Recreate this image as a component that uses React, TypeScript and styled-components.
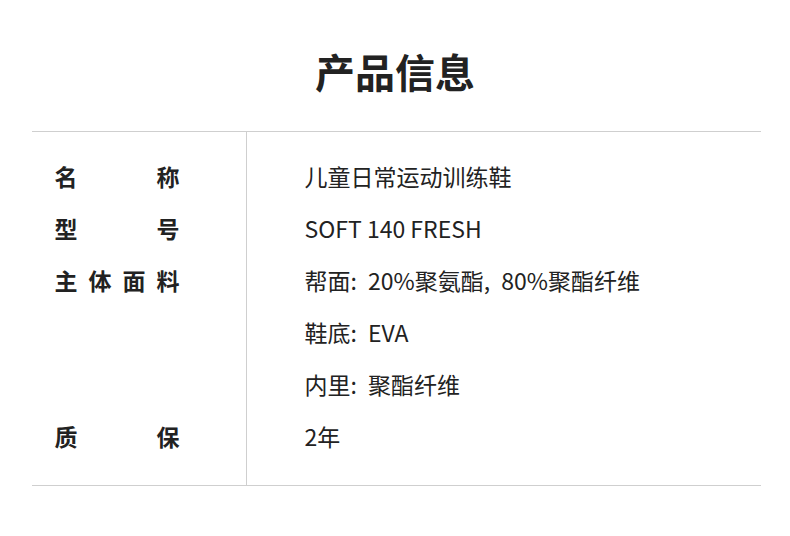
import React from 'react'
import styled, { createGlobalStyle } from 'styled-components'

const GlobalStyle = createGlobalStyle`
  html, body {
    margin: 0;
    padding: 0;
    background: #fff;
  }
  body {
    font-family: "Noto Sans CJK SC", "Noto Sans", sans-serif;
    color: #222;
  }
`

interface Spec {
  label: string
  values: string[]
}

const specs: Spec[] = [
  { label: '名称', values: ['儿童日常运动训练鞋'] },
  { label: '型号', values: ['SOFT 140 FRESH'] },
  { label: '主体面料', values: ['帮面: 20%聚氨酯, 80%聚酯纤维', '鞋底: EVA', '内里: 聚酯纤维'] },
  { label: '质保', values: ['2年'] },
]

// punctuation in the source sits a little looser than a plain space
const renderValue = (value: string) =>
  value.split(/([:,] )/).map((part, i) =>
    /^[:,] $/.test(part) ? <StyledSep key={i}>{part}</StyledSep> : <React.Fragment key={i}>{part}</React.Fragment>
  )

const App: React.FC = () => {
  return (
    <StyledPage>
      <GlobalStyle />
      <StyledTitle>产品信息</StyledTitle>
      <StyledTable>
        <StyledLabelColumn>
          {specs.map((spec) =>
            spec.values.map((_, i) => (
              <StyledRow key={`${spec.label}-${i}`}>
                {i === 0 && <StyledLabel>{spec.label}</StyledLabel>}
              </StyledRow>
            ))
          )}
        </StyledLabelColumn>
        <StyledValueColumn>
          {specs.map((spec) =>
            spec.values.map((value) => (
              <StyledRow key={value}>
                <StyledValue>{renderValue(value)}</StyledValue>
              </StyledRow>
            ))
          )}
        </StyledValueColumn>
      </StyledTable>
    </StyledPage>
  )
}

const StyledPage = styled.div`
  width: 790px;
  height: 536px;
  display: flex;
  flex-direction: column;
  align-items: center;
`

const StyledTitle = styled.h1`
  margin: 0;
  padding: 51px 0 40px;
  font-size: 40px;
  line-height: 40px;
  font-weight: 700;
  color: #222;
`

const StyledTable = styled.div`
  width: 729px;
  margin-left: 2px;
  display: flex;
  border-top: 1px solid #cfcfcf;
  border-bottom: 1px solid #cfcfcf;
`

const StyledLabelColumn = styled.div`
  width: 215px;
  padding: 18px 0 23px 23px;
  box-sizing: border-box;
  border-right: 1px solid #cfcfcf;
`

const StyledValueColumn = styled.div`
  flex: 1;
  padding: 18px 0 23px 58px;
`

const StyledRow = styled.div`
  height: 52px;
  display: flex;
  align-items: center;
`

const StyledLabel = styled.span`
  width: 125px;
  font-size: 23px;
  font-weight: 700;
  text-align: justify;
  text-align-last: justify;
  color: #222;
`

const StyledValue = styled.span`
  font-size: 23px;
  font-weight: 400;
  color: #222;
  white-space: nowrap;
`

const StyledSep = styled.span`
  margin-right: 6px;
`

export default App
